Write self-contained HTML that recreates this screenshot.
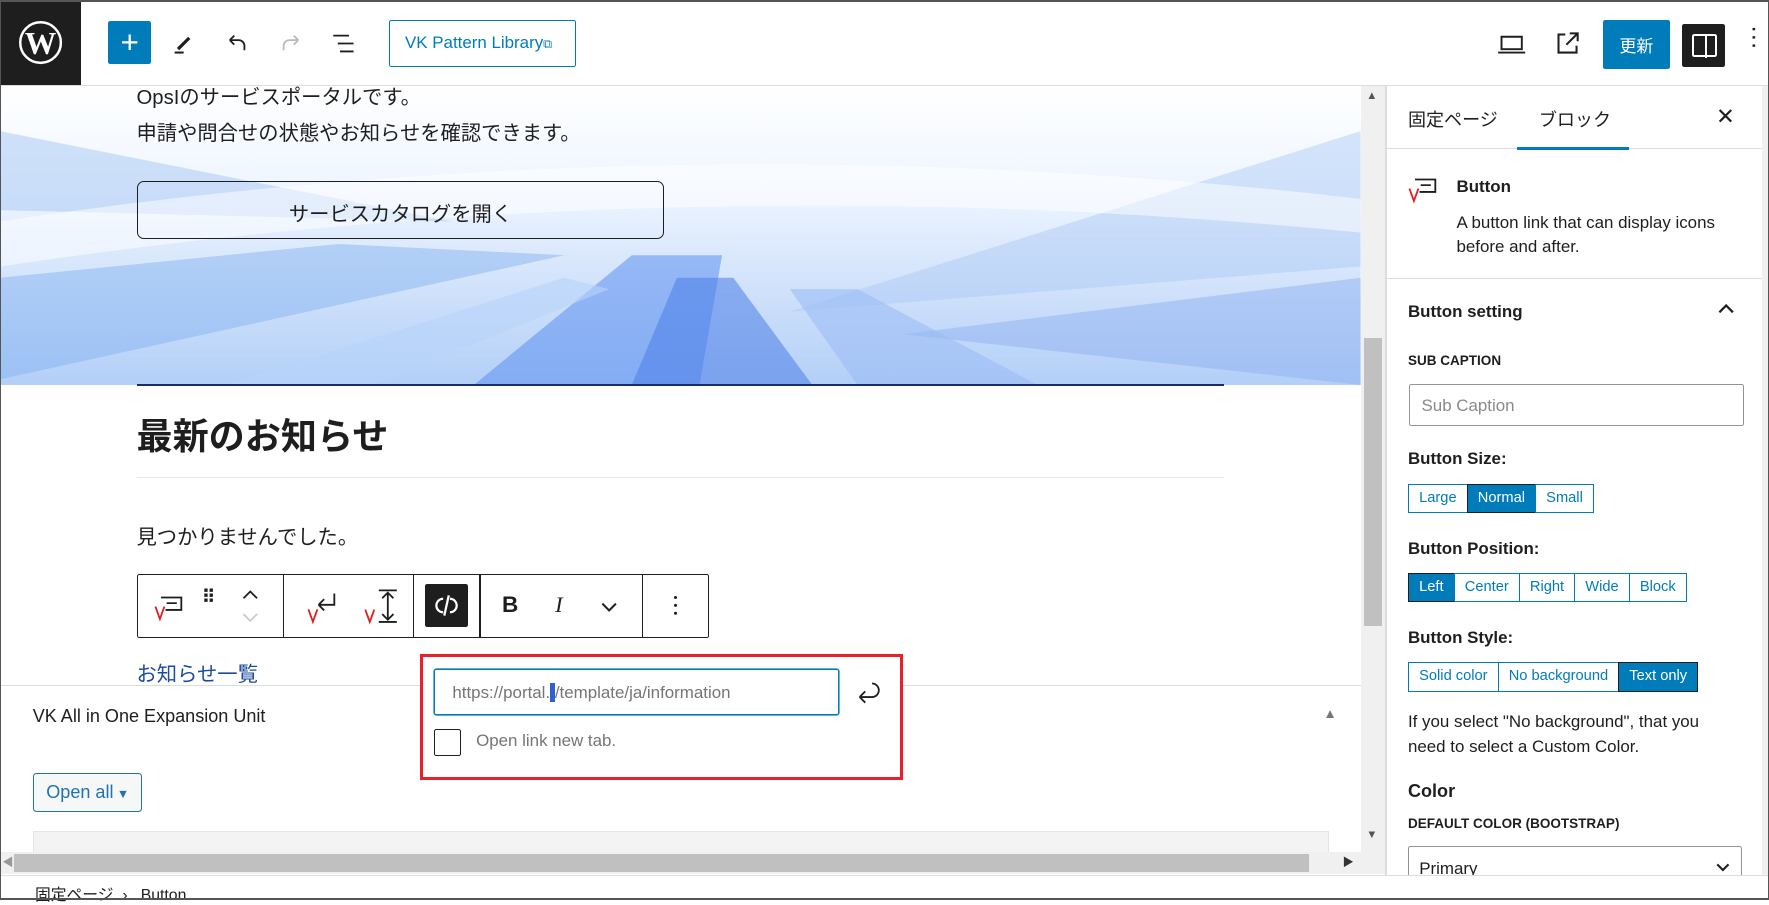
<!DOCTYPE html>
<html><head><meta charset="utf-8">
<style>
html,body{margin:0;padding:0;}
body{width:1568px;height:798px;zoom:1.12819;position:relative;overflow:hidden;background:#fff;font-family:"Liberation Sans","Noto Sans CJK JP",sans-serif;color:#1e1e1e;}
.a{position:absolute;}
.t{position:absolute;white-space:nowrap;}
.seg{position:absolute;display:flex;height:26px;}
.seg span{border:1px solid #007cba;margin-left:-1px;color:#007cba;font-size:13px;line-height:24px;padding:0 9px;background:#fff;}
.seg span.on{background:#007cba;color:#fff;border-color:#1e1e1e;}
</style></head><body>
<div class="a" style="left:0;top:0;width:1568px;height:2px;background:#555"></div>
<div class="a" style="left:0;top:2px;width:72px;height:73px;background:#1e1e1e"></div>
<svg class="a" style="left:16px;top:18px" width="40" height="40" viewBox="0 0 40 40"><circle cx="20" cy="20" r="18" fill="none" stroke="#fff" stroke-width="2.2"/><text x="20" y="30" text-anchor="middle" font-family="Liberation Serif" font-weight="bold" font-size="28" fill="#fff">W</text></svg>
<div class="a" style="left:0;top:75px;width:1568px;height:1px;background:#ddd"></div>
<div class="a" style="left:96px;top:19px;width:38px;height:38px;background:#007cba;border-radius:2px"></div>
<div class="t" style="left:96px;top:19px;width:38px;text-align:center;color:#fff;font-size:28px;line-height:38px">+</div>
<svg class="a" style="left:150px;top:27px" width="24" height="24" viewBox="0 0 24 24"><path d="M5 20h8" stroke="#1e1e1e" stroke-width="1.8"/><path d="M7 16l2 2 10-10-2-2z" fill="#1e1e1e"/></svg>
<svg class="a" style="left:198px;top:27px" width="24" height="24" viewBox="0 0 24 24"><path d="M6 9h8a5 5 0 0 1 5 5v4M6 9l4-4M6 9l4 4" fill="none" stroke="#1e1e1e" stroke-width="1.6"/></svg>
<svg class="a" style="left:246px;top:27px" width="24" height="24" viewBox="0 0 24 24"><path d="M18 9h-8a5 5 0 0 0-5 5v4M18 9l-4-4M18 9l-4 4" fill="none" stroke="#bbb" stroke-width="1.6"/></svg>
<svg class="a" style="left:293px;top:27px" width="24" height="24" viewBox="0 0 24 24"><path d="M2 5h14M6 12h14M8 19h12" stroke="#1e1e1e" stroke-width="1.6"/></svg>
<div class="a" style="left:345px;top:18px;width:164px;height:40px;border:1px solid #007cba;border-radius:2px"></div>
<div class="t" style="left:359px;top:29px;font-size:15px;color:#007cba">VK Pattern Library<span style="font-size:11px">⧉</span></div>
<svg class="a" style="left:1327px;top:27px" width="26" height="24" viewBox="0 0 26 24"><path d="M4 6h18v11H4zM1 20h24" fill="none" stroke="#1e1e1e" stroke-width="1.7"/></svg>
<svg class="a" style="left:1377px;top:27px" width="24" height="24" viewBox="0 0 24 24"><path d="M10 4H4v16h16v-6M14 3h7v7M21 3l-10 10" fill="none" stroke="#1e1e1e" stroke-width="1.8"/></svg>
<div class="a" style="left:1421px;top:18px;width:59px;height:43px;background:#007cba;border-radius:2px"></div>
<div class="t" style="left:1421px;top:28px;width:59px;text-align:center;color:#fff;font-size:15px">更新</div>
<div class="a" style="left:1491px;top:21px;width:38px;height:38px;background:#1e1e1e;border-radius:2px"></div>
<div class="a" style="left:1500px;top:30px;width:18px;height:17px;border:2px solid #fff;border-radius:2px"></div>
<div class="a" style="left:1511px;top:30px;width:2px;height:21px;background:#fff"></div>
<div class="t" style="left:1550px;top:22px;font-size:22px;line-height:10px;color:#1e1e1e;writing-mode:vertical-lr">···</div>

<svg class="a" style="left:0;top:76px" width="1206" height="265" viewBox="0 0 1206 265" preserveAspectRatio="none">
<defs><linearGradient id="g" x1="0" y1="0" x2="0" y2="1"><stop offset="0" stop-color="#ffffff"/><stop offset=".35" stop-color="#eef5ff"/><stop offset="1" stop-color="#b3cff7"/></linearGradient></defs>
<rect width="1206" height="265" fill="url(#g)"/>
<path d="M0 40 L400 120 L0 110Z" fill="#9ec0f2" opacity=".45"/>
<path d="M0 170 L300 140 L500 150 L0 260Z" fill="#7fb0f0" opacity=".45"/>
<path d="M1206 40 L700 200 L1206 160Z" fill="#a8c8f5" opacity=".45"/>
<path d="M1206 170 L800 220 L1206 265Z" fill="#8aaef0" opacity=".45"/>
<path d="M420 265 L560 150 L640 150 L620 265Z" fill="#5d8ff0" opacity=".55"/>
<path d="M560 265 L600 170 L650 170 L720 265Z" fill="#4a7ee8" opacity=".55"/>
<path d="M200 265 L500 170 L540 180 L330 265Z" fill="#b8d4fa" opacity=".6"/>
<path d="M760 265 L700 180 L760 180 L920 265Z" fill="#9bbcf5" opacity=".6"/>
<path d="M0 120 Q600 30 1206 100 L1206 130 Q600 70 0 160Z" fill="#ffffff" opacity=".5"/>
</svg>
<div class="t" style="left:121px;top:71px;font-size:18px">OpsIのサービスポータルです。</div>
<div class="t" style="left:121px;top:103px;font-size:18px">申請や問合せの状態やお知らせを確認できます。</div>
<div class="a" style="left:121px;top:160px;width:466px;height:50px;border:1px solid #1e1e1e;border-radius:6px"></div>
<div class="t" style="left:121px;top:175px;width:468px;text-align:center;font-size:18px">サービスカタログを開く</div>
<div class="a" style="left:121px;top:340px;width:964px;height:2px;background:#1a2c6b"></div>
<div class="t" style="left:121px;top:362px;font-size:32px;font-weight:bold">最新のお知らせ</div>
<div class="a" style="left:121px;top:423px;width:964px;height:1px;background:#e5e5e5"></div>
<div class="t" style="left:121px;top:461px;font-size:18px">見つかりませんでした。</div>

<div class="a" style="left:121px;top:509px;width:506px;height:55px;border:1px solid #1e1e1e;border-radius:2px;background:#fff"></div>
<div class="a" style="left:251px;top:510px;width:1px;height:55px;background:#1e1e1e"></div>
<div class="a" style="left:366px;top:510px;width:1px;height:55px;background:#1e1e1e"></div>
<div class="a" style="left:425px;top:510px;width:1px;height:55px;background:#1e1e1e"></div>
<div class="a" style="left:569px;top:510px;width:1px;height:55px;background:#1e1e1e"></div>
<svg class="a" style="left:135px;top:526px" width="28" height="26" viewBox="0 0 28 26"><path d="M8 4h18v11H12" fill="none" stroke="#1e1e1e" stroke-width="1.6"/><path d="M13 9h9" stroke="#1e1e1e" stroke-width="1.5"/><path d="M3 12l4 11 4-11" fill="none" stroke="#e02020" stroke-width="1.6"/></svg>
<div class="t" style="left:179px;top:526px;font-size:16px;line-height:8px;letter-spacing:1px;font-weight:bold">⠿</div>
<svg class="a" style="left:212px;top:520px" width="20" height="34" viewBox="0 0 20 34"><path d="M4 10l6-6 6 6" fill="none" stroke="#1e1e1e" stroke-width="1.6"/><path d="M4 24l6 6 6-6" fill="none" stroke="#ccc" stroke-width="1.6"/></svg>
<svg class="a" style="left:270px;top:522px" width="30" height="32" viewBox="0 0 30 32"><path d="M26 4v10H12M12 14l5-5M12 14l5 5" fill="none" stroke="#1e1e1e" stroke-width="1.6"/><path d="M3 18l4 11 4-11" fill="none" stroke="#e02020" stroke-width="1.6"/></svg>
<svg class="a" style="left:322px;top:520px" width="34" height="34" viewBox="0 0 34 34"><path d="M14 3h16M14 31h16M22 5v24M17 10l5-5 5 5M17 24l5 5 5-5" fill="none" stroke="#1e1e1e" stroke-width="1.6"/><path d="M2 20l4 11 4-11" fill="none" stroke="#e02020" stroke-width="1.6"/></svg>
<div class="a" style="left:377px;top:518px;width:38px;height:38px;background:#1e1e1e;border-radius:2px"></div>
<svg class="a" style="left:384px;top:525px" width="24" height="24" viewBox="0 0 24 24"><path d="M9 6a6 6 0 0 0 0 12M15 6a6 6 0 0 1 0 12M14 3l-4 18" fill="none" stroke="#fff" stroke-width="2"/></svg>
<div class="t" style="left:445px;top:525px;font-size:20px;font-weight:bold">B</div>
<div class="t" style="left:492px;top:525px;font-size:20px;font-style:italic;font-family:'Liberation Serif',serif">I</div>
<svg class="a" style="left:531px;top:530px" width="18" height="16" viewBox="0 0 18 16"><path d="M3 5l6 6 6-6" fill="none" stroke="#1e1e1e" stroke-width="1.8"/></svg>
<div class="a" style="left:597px;top:528px;width:3px;height:3px;background:#1e1e1e;border-radius:2px;box-shadow:0 7px 0 #1e1e1e,0 14px 0 #1e1e1e"></div>
<div class="t" style="left:121px;top:582px;font-size:18px;color:#1a4b9c">お知らせ一覧</div>

<div class="a" style="left:0;top:607px;width:1206px;height:1px;background:#ddd"></div>
<div class="t" style="left:29px;top:626px;font-size:16px;color:#1e1e1e">VK All in One Expansion Unit</div>
<div class="t" style="left:1173px;top:626px;font-size:12px;color:#757575">▲</div>
<div class="a" style="left:29px;top:685px;width:95px;height:33px;border:1px solid #2271b1;border-radius:3px;background:#f6f7f7"></div>
<div class="t" style="left:41px;top:693px;font-size:16px;color:#2271b1">Open all<span style="font-size:11px"> ▼</span></div>
<div class="a" style="left:29px;top:737px;width:1147px;height:18px;background:#f3f3f3;border:1px solid #e5e5e5;border-bottom:0"></div>

<div class="a" style="left:372px;top:580px;width:423px;height:106px;border:3px solid #e8202a;background:#fff"></div>
<div class="a" style="left:385px;top:593px;width:357px;height:39px;border:1px solid #007cba;border-radius:2px;box-shadow:0 0 0 .5px #007cba"></div>
<div class="t" style="left:401px;top:605px;font-size:15px;color:#757575">https://portal.<span style="background:#3060d0;color:#3060d0">.</span>/template/ja/information</div>
<svg class="a" style="left:757px;top:602px" width="26" height="26" viewBox="0 0 26 26"><path d="M16 4a6 6 0 0 1 0 12H5M5 16l5-5M5 16l5 5" fill="none" stroke="#1e1e1e" stroke-width="1.6"/></svg>
<div class="a" style="left:385px;top:646px;width:22px;height:22px;border:1px solid #1e1e1e;border-radius:2px"></div>
<div class="t" style="left:422px;top:648px;font-size:15px;color:#757575">Open link new tab.</div>

<div class="a" style="left:1206px;top:76px;width:22px;height:680px;background:#f0f0f0"></div>
<div class="a" style="left:1209px;top:300px;width:16px;height:255px;background:#c0c0c0"></div>
<div class="t" style="left:1211px;top:80px;font-size:10px;color:#555">▲</div>
<div class="t" style="left:1211px;top:735px;font-size:10px;color:#555">▼</div>
<div class="a" style="left:0;top:755px;width:1228px;height:20px;background:#f0f0f0"></div>
<div class="a" style="left:12px;top:757px;width:1148px;height:16px;background:#c0c0c0"></div>
<div class="t" style="left:2px;top:757px;font-size:10px;color:#999">◀</div>
<div class="t" style="left:1190px;top:757px;font-size:10px;color:#333">▶</div>

<div class="a" style="left:1228px;top:76px;width:1px;height:700px;background:#ddd"></div>
<div class="t" style="left:1248px;top:94px;font-size:16px;color:#1e1e1e">固定ページ</div>
<div class="t" style="left:1364px;top:94px;font-size:16px;color:#1e1e1e">ブロック</div>
<div class="t" style="left:1521px;top:92px;font-size:20px">✕</div>
<div class="a" style="left:1229px;top:131px;width:339px;height:1px;background:#ddd"></div>
<div class="a" style="left:1345px;top:130px;width:99px;height:3px;background:#007cba"></div>
<svg class="a" style="left:1246px;top:155px" width="30" height="28" viewBox="0 0 30 28"><path d="M8 4h18v11H12" fill="none" stroke="#1e1e1e" stroke-width="1.6"/><path d="M13 9h9" stroke="#1e1e1e" stroke-width="1.5"/><path d="M3 12l4 11 4-11" fill="none" stroke="#e02020" stroke-width="1.6"/></svg>
<div class="t" style="left:1291px;top:157px;font-size:15px;font-weight:bold;color:#1e1e1e">Button</div>
<div class="t" style="left:1291px;top:187px;font-size:15px;line-height:21px">A button link that can display icons<br>before and after.</div>
<div class="a" style="left:1229px;top:246px;width:339px;height:1px;background:#ddd"></div>
<div class="t" style="left:1248px;top:268px;font-size:15px;font-weight:bold">Button setting</div>
<svg class="a" style="left:1521px;top:267px" width="18" height="14" viewBox="0 0 18 14"><path d="M3 10l6-6 6 6" fill="none" stroke="#1e1e1e" stroke-width="2"/></svg>
<div class="t" style="left:1248px;top:313px;font-size:12px;font-weight:bold;color:#1e1e1e">SUB CAPTION</div>
<div class="a" style="left:1249px;top:340px;width:295px;height:36px;border:1px solid #949494;border-radius:2px"></div>
<div class="t" style="left:1260px;top:351px;font-size:15px;color:#8a8a8a">Sub Caption</div>
<div class="t" style="left:1248px;top:398px;font-size:15px;font-weight:bold">Button Size:</div>
<div class="seg" style="left:1249px;top:429px"><span>Large</span><span class="on">Normal</span><span>Small</span></div>
<div class="t" style="left:1248px;top:478px;font-size:15px;font-weight:bold">Button Position:</div>
<div class="seg" style="left:1249px;top:508px"><span class="on">Left</span><span>Center</span><span>Right</span><span>Wide</span><span>Block</span></div>
<div class="t" style="left:1248px;top:557px;font-size:15px;font-weight:bold">Button Style:</div>
<div class="seg" style="left:1249px;top:587px"><span>Solid color</span><span>No background</span><span class="on">Text only</span></div>
<div class="t" style="left:1248px;top:628px;font-size:15px;line-height:23px">If you select "No background", that you<br>need to select a Custom Color.</div>
<div class="t" style="left:1248px;top:692px;font-size:16px;font-weight:bold">Color</div>
<div class="t" style="left:1248px;top:723px;font-size:12px;font-weight:bold">DEFAULT COLOR (BOOTSTRAP)</div>
<div class="a" style="left:1248px;top:750px;width:294px;height:40px;border:1px solid #949494;border-radius:2px"></div>
<div class="t" style="left:1258px;top:761px;font-size:15px">Primary</div>
<svg class="a" style="left:1520px;top:763px" width="14" height="12" viewBox="0 0 14 12"><path d="M2 3l5 5 5-5" fill="none" stroke="#1e1e1e" stroke-width="1.8"/></svg>
<div class="a" style="left:1562px;top:76px;width:6px;height:700px;background:#f0f0f0"></div>

<div class="a" style="left:0;top:776px;width:1568px;height:22px;background:#fff;border-top:1px solid #ddd"></div>
<div class="t" style="left:31px;top:782px;font-size:14px">固定ページ &nbsp;›&nbsp;&nbsp; Button</div>
<div class="a" style="left:0;top:796px;width:1568px;height:2px;background:#555"></div>
<div class="a" style="left:0;top:0;width:1px;height:798px;background:#555"></div>
<div class="a" style="left:1567px;top:0;width:1px;height:798px;background:#555"></div>
</body></html>
